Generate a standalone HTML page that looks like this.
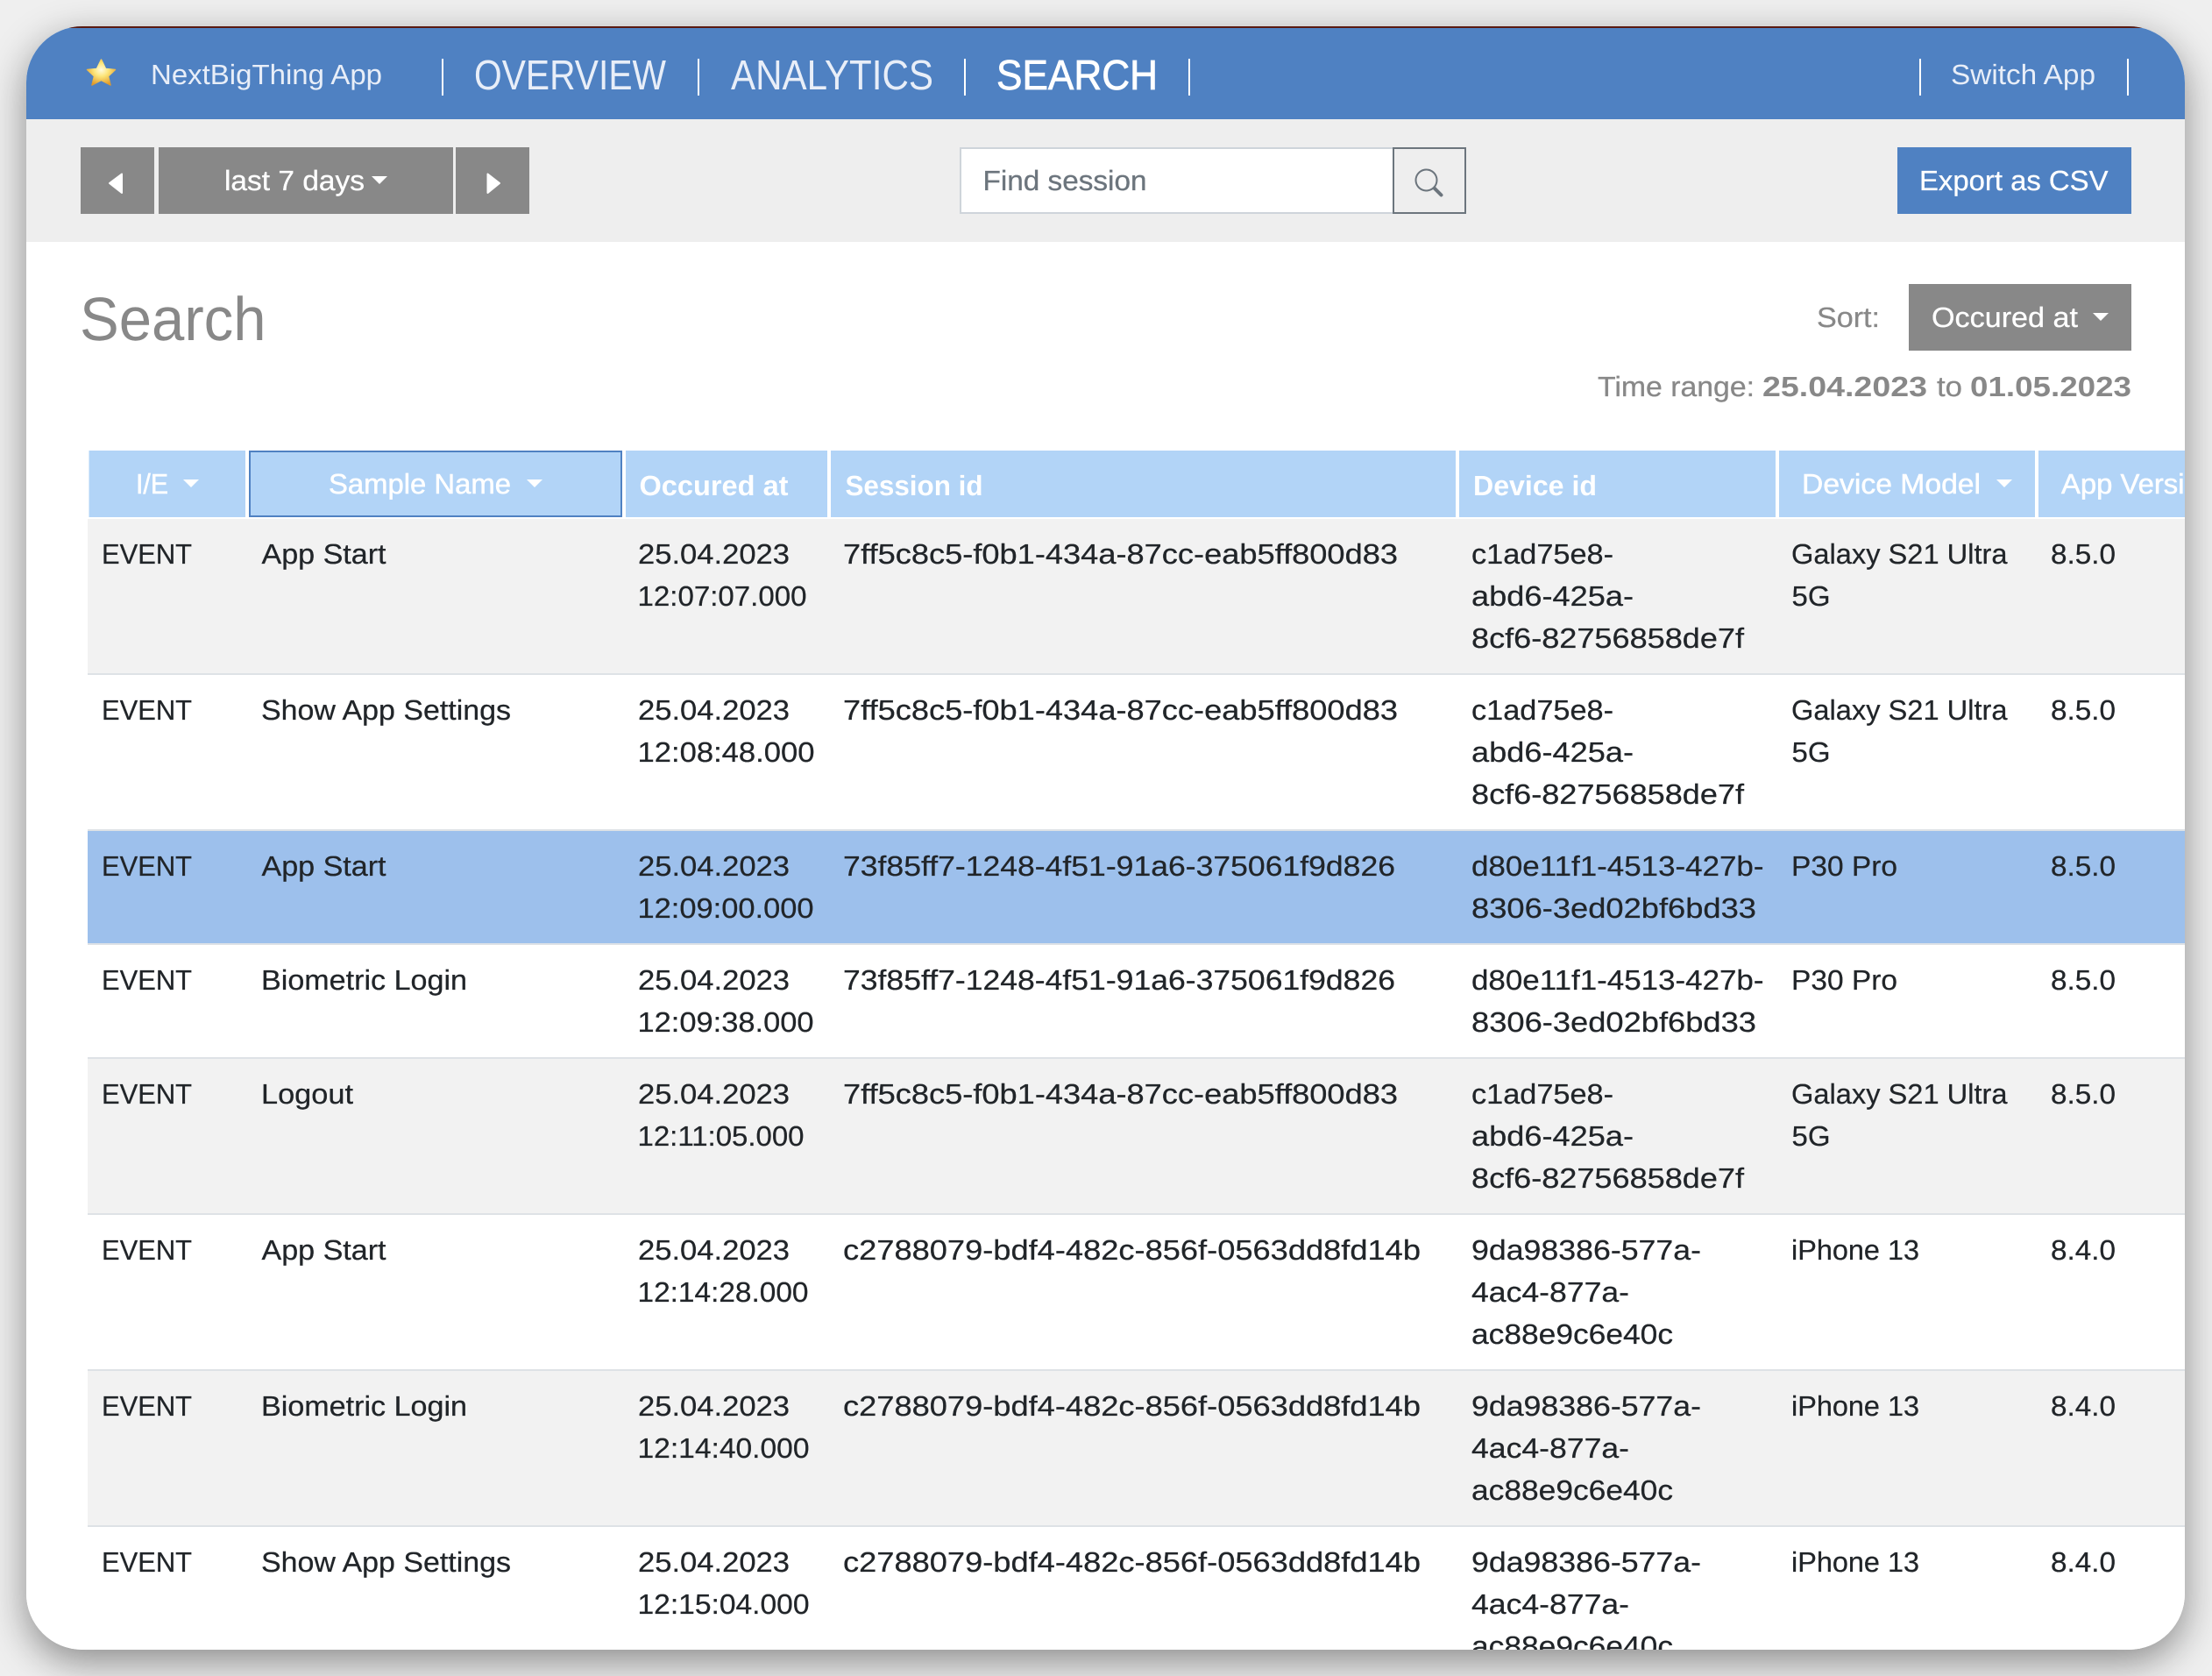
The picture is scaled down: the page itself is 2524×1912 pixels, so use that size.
<!DOCTYPE html>
<html lang="en"><head><meta charset="utf-8"><title>Search</title>
<style>
html,body{margin:0;padding:0;width:2524px;height:1912px;overflow:hidden;background:#efefef}
.win{position:absolute;left:30px;top:30px;width:2463px;height:1852px;border-radius:64px;box-shadow:0 14px 44px rgba(0,0,0,.42);background:#fff}
.clip{position:absolute;inset:0;border-radius:64px;overflow:hidden}
svg{position:absolute;left:-30px;top:-30px;width:2524px;height:1912px;display:block}
text{font-family:"Liberation Sans",sans-serif;font-size:32px;fill:#212529;text-rendering:geometricPrecision}
text:not([class]){stroke:#212529;stroke-width:.25px}
.w{fill:#fff}
.h{fill:#fff;stroke:#fff;stroke-width:.5px}
.hb{fill:#fff;font-weight:700}
.g{fill:#888}
.f{fill:#6c757d}
.l{fill:#e8eef8}
</style></head><body>
<div class="win"><div class="clip">
<svg viewBox="0 0 2524 1912" xmlns="http://www.w3.org/2000/svg">
<defs>
<radialGradient id="st" cx="50%" cy="40%" r="62%"><stop offset="0" stop-color="#fffbe0"/><stop offset=".42" stop-color="#fde67a"/><stop offset="1" stop-color="#e09a2a"/></radialGradient>
</defs>
<rect x="0" y="0" width="2524" height="1912" fill="#fff"/>
<!-- header -->
<rect x="0" y="30" width="2524" height="106" fill="#4f81c2"/>
<rect x="0" y="30" width="2524" height="2" fill="#5a1a10"/>
<polygon points="115.5,68 120.5,78.5 131.5,79.5 123.5,87 126,97 115.5,91.5 105,97 107.5,87 99.5,79.5 110.5,78.5" fill="url(#st)" stroke="url(#st)" stroke-width="1.5" stroke-linejoin="round"/>
<text class="l" x="172" y="96" textLength="264" lengthAdjust="spacingAndGlyphs">NextBigThing App</text>
<rect x="504" y="67" width="2" height="42" fill="#fff"/>
<text class="l" style="font-size:48px" x="541" y="102" textLength="219" lengthAdjust="spacingAndGlyphs">OVERVIEW</text>
<rect x="796" y="67" width="2" height="42" fill="#fff"/>
<text class="l" style="font-size:48px" x="834" y="102" textLength="231" lengthAdjust="spacingAndGlyphs">ANALYTICS</text>
<rect x="1100" y="67" width="2" height="42" fill="#fff"/>
<text class="w" style="font-size:48px;stroke:#fff;stroke-width:.8px" x="1137" y="102" textLength="184" lengthAdjust="spacingAndGlyphs">SEARCH</text>
<rect x="1356" y="67" width="2" height="42" fill="#fff"/>
<rect x="2190" y="67" width="2" height="42" fill="#fff"/>
<text class="l" x="2226" y="96" textLength="165" lengthAdjust="spacingAndGlyphs">Switch App</text>
<rect x="2427" y="67" width="2" height="42" fill="#fff"/>
<!-- toolbar -->
<rect x="0" y="136" width="2524" height="140" fill="#eee"/>
<rect x="92" y="168" width="84" height="76" fill="#888"/>
<rect x="181" y="168" width="336" height="76" fill="#888"/>
<rect x="520" y="168" width="84" height="76" fill="#888"/>
<path d="M139 198.5V220L125 209Z" fill="#fff" stroke="#fff" stroke-width="2" stroke-linejoin="round"/>
<path d="M556.500 198.500V220L570 209Z" fill="#fff" stroke="#fff" stroke-width="2" stroke-linejoin="round"/>
<text class="w" style="stroke:#fff;stroke-width:.3px" x="256" y="217" textLength="160" lengthAdjust="spacingAndGlyphs">last 7 days</text>
<path d="M424 201H442L433 210Z" fill="#fff"/>
<rect x="1096" y="169" width="495" height="74" fill="#fff" stroke="#ced4da" stroke-width="2"/>
<text class="f" style="stroke:#6c757d;stroke-width:.3px" x="1121.500" y="217" textLength="187" lengthAdjust="spacingAndGlyphs">Find session</text>
<rect x="1590" y="169" width="82" height="74" fill="#eee" stroke="#6c757d" stroke-width="2"/>
<g transform="translate(1614.500 192.500) scale(2)"><path fill="#6c757d" d="M11.742 10.344a6.5 6.5 0 1 0-1.397 1.398h-.001c.03.04.062.078.098.115l3.850 3.850a1 1 0 0 0 1.415-1.414l-3.850-3.850a1.007 1.007 0 0 0-.115-.1zM12 6.500a5.500 5.500 0 1 1-11 0 5.500 5.500 0 0 1 11 0z"/></g>
<rect x="2165" y="168" width="267" height="76" fill="#4f81c2"/>
<text class="w" style="stroke:#fff;stroke-width:.3px" x="2190" y="217" textLength="215.500" lengthAdjust="spacingAndGlyphs">Export as CSV</text>
<!-- title row -->
<text class="g" style="font-size:70px" x="91" y="388" textLength="212.500" lengthAdjust="spacingAndGlyphs">Search</text>
<text class="g" style="stroke:#888;stroke-width:.3px" x="2073" y="373" textLength="72" lengthAdjust="spacingAndGlyphs">Sort:</text>
<rect x="2178" y="324" width="254" height="76" fill="#888"/>
<text class="w" style="stroke:#fff;stroke-width:.3px" x="2204" y="373" textLength="167" lengthAdjust="spacingAndGlyphs">Occured at</text>
<path d="M2388 357H2406L2397 366Z" fill="#fff"/>
<text class="g" style="stroke:#888;stroke-width:.3px" x="1823" y="452" textLength="179" lengthAdjust="spacingAndGlyphs">Time range:</text>
<text class="g" style="font-weight:700" x="2011" y="452" textLength="188" lengthAdjust="spacingAndGlyphs">25.04.2023</text>
<text class="g" style="stroke:#888;stroke-width:.3px" x="2210" y="452" textLength="29" lengthAdjust="spacingAndGlyphs">to</text>
<text class="g" style="font-weight:700" x="2248" y="452" textLength="184" lengthAdjust="spacingAndGlyphs">01.05.2023</text>
<!-- table head -->
<g fill="#b2d4f7">
<rect x="101.500" y="514" width="178.500" height="76"/>
<rect x="285" y="515" width="424" height="74" stroke="#4f81c2" stroke-width="2"/>
<rect x="714" y="514" width="230" height="76"/>
<rect x="948" y="514" width="713" height="76"/>
<rect x="1665" y="514" width="361" height="76"/>
<rect x="2030" y="514" width="292" height="76"/>
<rect x="2326" y="514" width="198" height="76"/>
</g>
<text class="h" x="155" y="563" textLength="37" lengthAdjust="spacingAndGlyphs">I/E</text>
<path d="M209 547H227L218 556Z" fill="#fff"/>
<text class="h" x="375" y="563" textLength="208" lengthAdjust="spacingAndGlyphs">Sample Name</text>
<path d="M601 547H619L610 556Z" fill="#fff"/>
<text class="hb" x="729.500" y="565" textLength="170" lengthAdjust="spacingAndGlyphs">Occured at</text>
<text class="hb" x="964.500" y="565" textLength="157" lengthAdjust="spacingAndGlyphs">Session id</text>
<text class="hb" x="1681" y="565" textLength="141" lengthAdjust="spacingAndGlyphs">Device id</text>
<text class="h" x="2056" y="563" textLength="204" lengthAdjust="spacingAndGlyphs">Device Model</text>
<path d="M2278 547H2296L2287 556Z" fill="#fff"/>
<text class="h" x="2352" y="563" textLength="177" lengthAdjust="spacingAndGlyphs">App Version</text>
<!-- rows -->
<rect x="100" y="592" width="2424" height="176" fill="#f2f2f2"/><rect x="100" y="768" width="2424" height="2" fill="#dee2e6"/>
<rect x="100" y="946" width="2424" height="2" fill="#dee2e6"/>
<rect x="100" y="948" width="2424" height="128" fill="#9dc0ec"/><rect x="100" y="1076" width="2424" height="2" fill="#dee2e6"/>
<rect x="100" y="1206" width="2424" height="2" fill="#dee2e6"/>
<rect x="100" y="1208" width="2424" height="176" fill="#f2f2f2"/><rect x="100" y="1384" width="2424" height="2" fill="#dee2e6"/>
<rect x="100" y="1562" width="2424" height="2" fill="#dee2e6"/>
<rect x="100" y="1564" width="2424" height="176" fill="#f2f2f2"/><rect x="100" y="1740" width="2424" height="2" fill="#dee2e6"/>
<!-- row 1 -->
<text x="116" y="643" textLength="103" lengthAdjust="spacingAndGlyphs">EVENT</text>
<text x="298.500" y="643" textLength="142" lengthAdjust="spacingAndGlyphs">App Start</text>
<text x="728" y="643" textLength="173" lengthAdjust="spacingAndGlyphs">25.04.2023</text>
<text x="727.500" y="691" textLength="193" lengthAdjust="spacingAndGlyphs">12:07:07.000</text>
<text x="962" y="643" textLength="633" lengthAdjust="spacingAndGlyphs">7ff5c8c5-f0b1-434a-87cc-eab5ff800d83</text>
<text x="1679" y="643" textLength="162" lengthAdjust="spacingAndGlyphs">c1ad75e8-</text>
<text x="1679" y="691" textLength="185" lengthAdjust="spacingAndGlyphs">abd6-425a-</text>
<text x="1679" y="739" textLength="311" lengthAdjust="spacingAndGlyphs">8cf6-82756858de7f</text>
<text x="2044" y="643" textLength="246.500" lengthAdjust="spacingAndGlyphs">Galaxy S21 Ultra</text>
<text x="2044.500" y="691" textLength="44" lengthAdjust="spacingAndGlyphs">5G</text>
<text x="2340" y="643" textLength="74" lengthAdjust="spacingAndGlyphs">8.5.0</text>
<!-- row 2 -->
<text x="116" y="821" textLength="103" lengthAdjust="spacingAndGlyphs">EVENT</text>
<text x="298" y="821" textLength="285" lengthAdjust="spacingAndGlyphs">Show App Settings</text>
<text x="728" y="821" textLength="173" lengthAdjust="spacingAndGlyphs">25.04.2023</text>
<text x="727.500" y="869" textLength="202" lengthAdjust="spacingAndGlyphs">12:08:48.000</text>
<text x="962" y="821" textLength="633" lengthAdjust="spacingAndGlyphs">7ff5c8c5-f0b1-434a-87cc-eab5ff800d83</text>
<text x="1679" y="821" textLength="162" lengthAdjust="spacingAndGlyphs">c1ad75e8-</text>
<text x="1679" y="869" textLength="185" lengthAdjust="spacingAndGlyphs">abd6-425a-</text>
<text x="1679" y="917" textLength="311" lengthAdjust="spacingAndGlyphs">8cf6-82756858de7f</text>
<text x="2044" y="821" textLength="246.500" lengthAdjust="spacingAndGlyphs">Galaxy S21 Ultra</text>
<text x="2044.500" y="869" textLength="44" lengthAdjust="spacingAndGlyphs">5G</text>
<text x="2340" y="821" textLength="74" lengthAdjust="spacingAndGlyphs">8.5.0</text>
<!-- row 3 -->
<text x="116" y="999" textLength="103" lengthAdjust="spacingAndGlyphs">EVENT</text>
<text x="298.500" y="999" textLength="142" lengthAdjust="spacingAndGlyphs">App Start</text>
<text x="728" y="999" textLength="173" lengthAdjust="spacingAndGlyphs">25.04.2023</text>
<text x="727.500" y="1047" textLength="201" lengthAdjust="spacingAndGlyphs">12:09:00.000</text>
<text x="962" y="999" textLength="630" lengthAdjust="spacingAndGlyphs">73f85ff7-1248-4f51-91a6-375061f9d826</text>
<text x="1679" y="999" textLength="333.500" lengthAdjust="spacingAndGlyphs">d80e11f1-4513-427b-</text>
<text x="1679" y="1047" textLength="325" lengthAdjust="spacingAndGlyphs">8306-3ed02bf6bd33</text>
<text x="2044" y="999" textLength="121" lengthAdjust="spacingAndGlyphs">P30 Pro</text>
<text x="2340" y="999" textLength="74" lengthAdjust="spacingAndGlyphs">8.5.0</text>
<!-- row 4 -->
<text x="116" y="1129" textLength="103" lengthAdjust="spacingAndGlyphs">EVENT</text>
<text x="298" y="1129" textLength="235" lengthAdjust="spacingAndGlyphs">Biometric Login</text>
<text x="728" y="1129" textLength="173" lengthAdjust="spacingAndGlyphs">25.04.2023</text>
<text x="727.500" y="1177" textLength="201" lengthAdjust="spacingAndGlyphs">12:09:38.000</text>
<text x="962" y="1129" textLength="630" lengthAdjust="spacingAndGlyphs">73f85ff7-1248-4f51-91a6-375061f9d826</text>
<text x="1679" y="1129" textLength="333.500" lengthAdjust="spacingAndGlyphs">d80e11f1-4513-427b-</text>
<text x="1679" y="1177" textLength="325" lengthAdjust="spacingAndGlyphs">8306-3ed02bf6bd33</text>
<text x="2044" y="1129" textLength="121" lengthAdjust="spacingAndGlyphs">P30 Pro</text>
<text x="2340" y="1129" textLength="74" lengthAdjust="spacingAndGlyphs">8.5.0</text>
<!-- row 5 -->
<text x="116" y="1259" textLength="103" lengthAdjust="spacingAndGlyphs">EVENT</text>
<text x="298" y="1259" textLength="105" lengthAdjust="spacingAndGlyphs">Logout</text>
<text x="728" y="1259" textLength="173" lengthAdjust="spacingAndGlyphs">25.04.2023</text>
<text x="727.500" y="1307" textLength="190" lengthAdjust="spacingAndGlyphs">12:11:05.000</text>
<text x="962" y="1259" textLength="633" lengthAdjust="spacingAndGlyphs">7ff5c8c5-f0b1-434a-87cc-eab5ff800d83</text>
<text x="1679" y="1259" textLength="162" lengthAdjust="spacingAndGlyphs">c1ad75e8-</text>
<text x="1679" y="1307" textLength="185" lengthAdjust="spacingAndGlyphs">abd6-425a-</text>
<text x="1679" y="1355" textLength="311" lengthAdjust="spacingAndGlyphs">8cf6-82756858de7f</text>
<text x="2044" y="1259" textLength="246.500" lengthAdjust="spacingAndGlyphs">Galaxy S21 Ultra</text>
<text x="2044.500" y="1307" textLength="44" lengthAdjust="spacingAndGlyphs">5G</text>
<text x="2340" y="1259" textLength="74" lengthAdjust="spacingAndGlyphs">8.5.0</text>
<!-- row 6 -->
<text x="116" y="1437" textLength="103" lengthAdjust="spacingAndGlyphs">EVENT</text>
<text x="298.500" y="1437" textLength="142" lengthAdjust="spacingAndGlyphs">App Start</text>
<text x="728" y="1437" textLength="173" lengthAdjust="spacingAndGlyphs">25.04.2023</text>
<text x="727.500" y="1485" textLength="195" lengthAdjust="spacingAndGlyphs">12:14:28.000</text>
<text x="962" y="1437" textLength="659" lengthAdjust="spacingAndGlyphs">c2788079-bdf4-482c-856f-0563dd8fd14b</text>
<text x="1679" y="1437" textLength="262" lengthAdjust="spacingAndGlyphs">9da98386-577a-</text>
<text x="1679" y="1485" textLength="180" lengthAdjust="spacingAndGlyphs">4ac4-877a-</text>
<text x="1679" y="1533" textLength="230" lengthAdjust="spacingAndGlyphs">ac88e9c6e40c</text>
<text x="2044" y="1437" textLength="146" lengthAdjust="spacingAndGlyphs">iPhone 13</text>
<text x="2340" y="1437" textLength="74" lengthAdjust="spacingAndGlyphs">8.4.0</text>
<!-- row 7 -->
<text x="116" y="1615" textLength="103" lengthAdjust="spacingAndGlyphs">EVENT</text>
<text x="298" y="1615" textLength="235" lengthAdjust="spacingAndGlyphs">Biometric Login</text>
<text x="728" y="1615" textLength="173" lengthAdjust="spacingAndGlyphs">25.04.2023</text>
<text x="727.500" y="1663" textLength="196" lengthAdjust="spacingAndGlyphs">12:14:40.000</text>
<text x="962" y="1615" textLength="659" lengthAdjust="spacingAndGlyphs">c2788079-bdf4-482c-856f-0563dd8fd14b</text>
<text x="1679" y="1615" textLength="262" lengthAdjust="spacingAndGlyphs">9da98386-577a-</text>
<text x="1679" y="1663" textLength="180" lengthAdjust="spacingAndGlyphs">4ac4-877a-</text>
<text x="1679" y="1711" textLength="230" lengthAdjust="spacingAndGlyphs">ac88e9c6e40c</text>
<text x="2044" y="1615" textLength="146" lengthAdjust="spacingAndGlyphs">iPhone 13</text>
<text x="2340" y="1615" textLength="74" lengthAdjust="spacingAndGlyphs">8.4.0</text>
<!-- row 8 -->
<text x="116" y="1793" textLength="103" lengthAdjust="spacingAndGlyphs">EVENT</text>
<text x="298" y="1793" textLength="285" lengthAdjust="spacingAndGlyphs">Show App Settings</text>
<text x="728" y="1793" textLength="173" lengthAdjust="spacingAndGlyphs">25.04.2023</text>
<text x="727.500" y="1841" textLength="196" lengthAdjust="spacingAndGlyphs">12:15:04.000</text>
<text x="962" y="1793" textLength="659" lengthAdjust="spacingAndGlyphs">c2788079-bdf4-482c-856f-0563dd8fd14b</text>
<text x="1679" y="1793" textLength="262" lengthAdjust="spacingAndGlyphs">9da98386-577a-</text>
<text x="1679" y="1841" textLength="180" lengthAdjust="spacingAndGlyphs">4ac4-877a-</text>
<text x="1679" y="1889" textLength="230" lengthAdjust="spacingAndGlyphs">ac88e9c6e40c</text>
<text x="2044" y="1793" textLength="146" lengthAdjust="spacingAndGlyphs">iPhone 13</text>
<text x="2340" y="1793" textLength="74" lengthAdjust="spacingAndGlyphs">8.4.0</text>
</svg>
</div></div>
</body></html>
